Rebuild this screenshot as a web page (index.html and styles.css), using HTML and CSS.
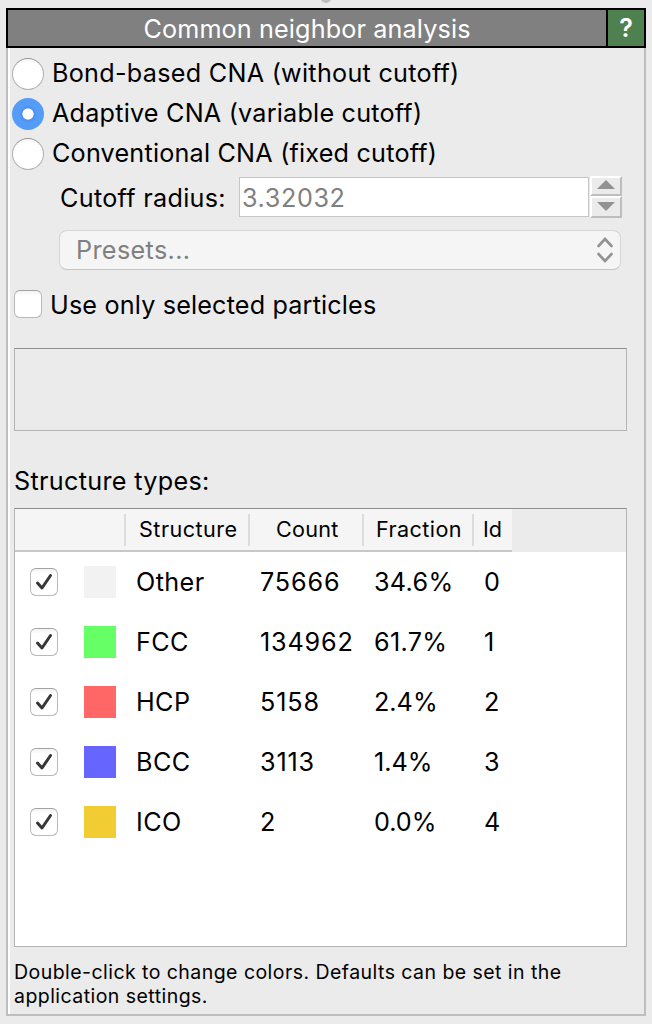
FILE: index.html
```html
<!DOCTYPE html>
<html lang="en">
<head>
<meta charset="utf-8">
<title>Common neighbor analysis</title>
<link rel="stylesheet" href="styles.css">
</head>
<body>
<div class="grip"></div>
<section class="panel">
  <header class="titlebar"><h1 class="title"><span class="t-title">Common neighbor analysis</span></h1><button class="help">?</button></header>
  <div class="content">
    <div class="radios">
      <label class="option"><span class="radio"></span><span class="t-bond">Bond-based CNA (without cutoff)</span></label>
      <label class="option"><span class="radio selected"></span><span class="t-adaptive">Adaptive CNA (variable cutoff)</span></label>
      <label class="option"><span class="radio"></span><span class="t-conv">Conventional CNA (fixed cutoff)</span></label>
    </div>
    <div class="cutoff">
      <span class="cutoff-label t-cutoff">Cutoff radius:</span>
      <div class="field"><span class="t-value">3.32032</span></div>
      <div class="spinner">
        <span class="step up"><svg width="18" height="9" viewBox="0 0 18 9"><path d="M0 9 9 0 18 9z"/></svg></span>
        <span class="step down"><svg width="18" height="9" viewBox="0 0 18 9"><path d="M0 0H18L9 9z"/></svg></span>
      </div>
    </div>
    <div class="presets"><span class="t-presets">Presets...</span><svg class="chevrons" width="16" height="26" viewBox="0 0 16 26"><path d="M1.500 9 8 2 14.500 9M1.500 17 8 24 14.500 17"/></svg></div>
    <label class="only"><span class="check"></span><span class="t-only">Use only selected particles</span></label>
    <div class="status"></div>
    <h2 class="subtitle"><span class="t-types">Structure types:</span></h2>
    <div class="table">
      <div class="head">
        <span></span><span class="t-hstructure">Structure</span><span class="t-hcount">Count</span><span class="t-hfraction">Fraction</span><span class="t-hid">Id</span>
      </div>
      <div class="row"><span class="check"><svg class="tick" viewBox="0 0 28 28"><path d="M7.500 15 12 20 20.500 7.500"/></svg></span><i class="swatch other"></i><span class="name">Other</span><span class="count">75666</span><span class="fraction">34.6%</span><span>0</span></div>
      <div class="row"><span class="check"><svg class="tick" viewBox="0 0 28 28"><path d="M7.500 15 12 20 20.500 7.500"/></svg></span><i class="swatch fcc"></i><span class="name">FCC</span><span class="count">134962</span><span class="fraction">61.7%</span><span>1</span></div>
      <div class="row"><span class="check"><svg class="tick" viewBox="0 0 28 28"><path d="M7.500 15 12 20 20.500 7.500"/></svg></span><i class="swatch hcp"></i><span class="name">HCP</span><span class="count">5158</span><span class="fraction fit">2.4%</span><span>2</span></div>
      <div class="row"><span class="check"><svg class="tick" viewBox="0 0 28 28"><path d="M7.500 15 12 20 20.500 7.500"/></svg></span><i class="swatch bcc"></i><span class="name">BCC</span><span class="count">3113</span><span class="fraction fit">1.4%</span><span>3</span></div>
      <div class="row"><span class="check"><svg class="tick" viewBox="0 0 28 28"><path d="M7.500 15 12 20 20.500 7.500"/></svg></span><i class="swatch ico"></i><span class="name">ICO</span><span class="count">2</span><span class="fraction fit">0.0%</span><span>4</span></div>
    </div>
    <p class="note"><span class="t-note">Double-click to change colors. Defaults can be set in the</span><br><span class="t-note">application settings.</span></p>
  </div>
</section>
</body>
</html>
```
FILE: styles.css
```css
* { box-sizing: border-box; }
body {
  margin: 0;
  height: 1024px;
  overflow: hidden;
  background: #ebebeb;
  color: #000;
  font: 25.2px/30px Inter, "Noto Sans", sans-serif;
  white-space: nowrap;
}
.grip {
  width: 12px;
  height: 8px;
  margin-left: 320px;
  background: radial-gradient(circle at 6px -3px, #bdbdbd 5.5px, transparent 6.2px);
}
.panel {
  width: 640px;
  height: 1008px;
  margin-left: 6px;
}
.titlebar {
  display: flex;
  height: 40px;
  border: 2px solid #000;
  background: #808080;
}
.title {
  flex: 1;
  margin: 0;
  font-size: inherit;
  font-weight: 400;
  line-height: 38px;
  text-align: center;
  color: #fff;
}
.help {
  width: 38px;
  padding: 0;
  border: 0;
  border-left: 2px solid #000;
  background: #4f804f;
  color: #fff;
  font: 600 25px/36px Inter, sans-serif;
}
.content {
  height: 968px;
  padding: 10px 17px 0 4px;
  border: solid #bebebe;
  border-width: 0 2px 2px;
  box-shadow: inset 2px 0 #fff;
}
.radios {
  display: grid;
  gap: 8px;
}
.option {
  display: flex;
  align-items: center;
  gap: 8px;
  height: 32px;
}
.option > :last-child { margin-top: -2px; }
.radio {
  width: 32px;
  height: 32px;
  border: 1px solid #b1b1b1;
  border-top-color: #999;
  border-radius: 50%;
  background: linear-gradient(#f4f4f4, #fff 4px);
}
.selected {
  border: 0;
  background: radial-gradient(circle, #fff 5.2px, #4b8ff0 6px, #559bf8 9px);
}
.cutoff {
  display: flex;
  align-items: center;
  height: 42px;
  margin: 6px 0 0 48px;
}
.cutoff-label {
  width: 179px;
  padding-top: 2px;
}
.field {
  width: 350px;
  height: 40px;
  padding-left: 2px;
  border: 1px solid #c6c6c6;
  background: #fff;
  color: #808080;
  line-height: 40px;
}
.spinner {
  width: 32px;
  height: 42px;
  margin-left: 1px;
}
.step {
  display: flex;
  justify-content: center;
  height: 20px;
  padding-top: 2px;
  border: solid #bebebe;
  border-width: 2px;
  border-top-color: #fff;
  border-left-color: #fff;
  fill: #929292;
}
.down {
  height: 22px;
  padding-top: 4px;
}
.presets {
  display: flex;
  align-items: center;
  justify-content: space-between;
  width: 562px;
  height: 40px;
  margin: 12px 0 0 47px;
  padding: 0 7px 0 16px;
  border: 1px solid #d5d5d5;
  border-bottom-color: #c4c4c4;
  border-radius: 8px;
  background: #f5f5f5;
  color: #808080;
}
.chevrons {
  fill: none;
  stroke: #929292;
  stroke-width: 2.6;
  stroke-linecap: round;
}
.only {
  display: flex;
  align-items: center;
  gap: 8px;
  height: 28px;
  margin: 20px 0 0 2px;
}
.only > :last-child { padding-top: 2px; }
.check {
  width: 28px;
  height: 28px;
  border: 1px solid #b8b8b8;
  border-top-color: #a2a2a2;
  border-radius: 6px;
  background: linear-gradient(#f3f3f3, #fff 5px);
}
.tick {
  display: block;
  width: 28px;
  height: 28px;
  margin: -1px;
  fill: none;
  stroke: #373737;
  stroke-width: 3;
  stroke-linecap: round;
  stroke-linejoin: round;
}
.status {
  height: 83px;
  margin: 30px 0 0 2px;
  border: 1px solid #b4b4b4;
  border-top-color: #8e8e8e;
}
.subtitle {
  height: 30px;
  margin: 35px 0 12px 2px;
  font-size: inherit;
  font-weight: 400;
}
.table {
  height: 439px;
  margin-left: 2px;
  border: 1px solid #b4b4b4;
  border-top-color: #8e8e8e;
  background: #fff;
}
.head {
  display: grid;
  grid-template-columns: 109px 124px 114px 110px 40px;
  height: 43px;
  background: linear-gradient(#c8c8c8, #c8c8c8) 0 100% / 497px 2px no-repeat,
    linear-gradient(#f5f5f5, #f5f5f5) 0 0 / 497px 43px no-repeat, #ebebeb;
  font-size: 21.6px;
}
.head > * {
  height: 32px;
  margin-top: 5px;
  border-left: 2px solid #dcdcdc;
  line-height: 31px;
}
.head > :first-child { border-left: 0; }
.row {
  display: grid;
  grid-template-columns: 54px 52px 124px 114px 110px 40px;
  align-items: center;
  height: 60px;
  padding-left: 15px;
}
.row span:not(.check) { line-height: 32px; }
.swatch {
  width: 32px;
  height: 32px;
}
.other { background: #f2f2f2; }
.fcc { background: #66ff66; }
.hcp { background: #ff6666; }
.bcc { background: #6666ff; }
.ico { background: #f2cc33; }
.note {
  margin: 13px 0 0 2px;
  font-size: 19.5px;
  line-height: 24px;
}

/* Tracking */
.t-title { letter-spacing: .13px; }
.t-bond { letter-spacing: .27px; }
.t-adaptive { letter-spacing: .21px; }
.t-conv { letter-spacing: .2px; }
.t-cutoff { letter-spacing: .3px; }
.t-value { letter-spacing: .6px; }
.t-presets { letter-spacing: .35px; }
.t-only { letter-spacing: .16px; }
.t-types { letter-spacing: .31px; }
.t-hstructure { padding-left: 13px; letter-spacing: .48px; }
.t-hcount { padding-left: 26px; letter-spacing: .25px; }
.t-hfraction { padding-left: 12px; letter-spacing: .4px; }
.t-hid { padding-left: 9px; }
.name { letter-spacing: .4px; }
.count { letter-spacing: .85px; }
.fraction { letter-spacing: .3px; }
.fit { letter-spacing: 0; }
.t-note { letter-spacing: .45px; }
```
